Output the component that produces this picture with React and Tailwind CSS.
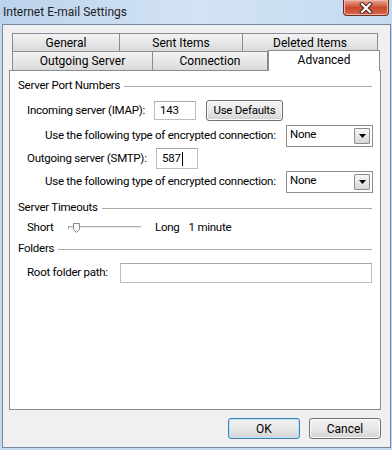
import React from "react"

const Tab = ({ label, className = "" }) => (
  <div
    className={`h-full flex items-center justify-center border-t border-r border-[#898c95] bg-linear-to-b from-[#f4f4f4] to-[#dadada] text-[12px] text-black ${className}`}
  >
    {label}
  </div>
)

const GroupHeader = ({ label, className = "" }) => (
  <div className={`flex items-center h-[16px] pl-[8px] pr-[8px] ${className}`}>
    <span className="whitespace-nowrap">{label}</span>
    <div className="flex-1 h-px bg-[#a8a8a8] ml-[4px]" />
  </div>
)

const Label = ({ children, className = "" }) => (
  <span className={`shrink-0 whitespace-nowrap ${className}`}>{children}</span>
)

const TextBox = ({ value, className = "", caret = false }) => (
  <div
    className={`shrink-0 flex items-center border border-[#b9bcc2] border-t-[#a3a6ab] bg-white pl-[5px] ${className}`}
  >
    <span>{value}</span>
    {caret && <span className="w-px h-[14px] bg-black ml-px" />}
  </div>
)

const Select = ({ value }) => (
  <div className="shrink-0 w-[87px] h-[22px] border border-[#8e8f8f] bg-white flex items-center justify-between pl-[3px] pr-[2px]">
    <span className="-mt-[2px]">{value}</span>
    <div className="w-[16px] h-[16px] border border-[#8c8c8c] rounded-[1px] bg-linear-to-b from-[#f6f6f6] to-[#d8d8d8] flex items-center justify-center">
      <svg width="7" height="4" viewBox="0 0 7 4">
        <path d="M0 0h7L3.5 4z" fill="#000" />
      </svg>
    </div>
  </div>
)

const Button = ({ label, className = "", primary = false }) => (
  <div
    className={`shrink-0 flex items-center justify-center rounded-[3px] border bg-linear-to-b from-[#f2f2f2] via-[#e9e9e9] to-[#d2d2d2] text-black ${
      primary
        ? "border-[#3c7fb1] shadow-[inset_0_0_0_1px_#bfe4f8]"
        : "border-[#707070] shadow-[inset_0_0_0_1px_#fbfbfb]"
    } ${className}`}
  >
    {label}
  </div>
)

export default function App() {
  return (
    <div className="w-[392px] h-[450px] bg-[#c2d8ee] flex flex-col font-[Roboto,'Liberation_Sans',sans-serif] text-[12px] text-black overflow-hidden">
      {/* title bar */}
      <div className="h-[24px] flex justify-between shrink-0 bg-linear-to-r from-[#bcd3ec] via-[#d3e3f5] to-[#c4daf0]">
        <span className="pl-[3px] pt-[3px] text-[12px] text-[#1e1e1e]">Internet E-mail Settings</span>
        <div className="mr-[3px] w-[46px] h-[16px] rounded-b-[4px] border border-t-0 border-[#6d2d24] bg-linear-to-b from-[#e9a896] via-[#c94b2f] to-[#d8644a] flex items-center justify-center shadow-[inset_0_0_0_1px_#eeb6a6]">
          <svg width="14" height="12" viewBox="0 0 14 12">
            <path d="M3 2l8 8M11 2l-8 8" stroke="#4a2a26" strokeWidth="4" strokeLinecap="square" />
            <path d="M3 2l8 8M11 2l-8 8" stroke="#fff" strokeWidth="2" strokeLinecap="square" />
          </svg>
        </div>
      </div>

      {/* client area */}
      <div className="ml-[2px] w-[389px] h-[424px] border border-[#77889b] bg-[#f0f0f0] flex flex-col pt-[8px] pl-[6px]">
        <div className="ml-[3px] flex flex-col">
          <div className="flex h-[18px]">
            <Tab label="General" className="w-[108px] border-l" />
            <Tab label="Sent Items" className="w-[123px]" />
            <Tab label="Deleted Items" className="w-[135px]" />
          </div>
          <div className="flex h-[19px] items-start">
            <Tab label="Outgoing Server" className="w-[141px] border-l" />
            <Tab label="Connection" className="w-[115px]" />
            <div className="relative z-10 w-[112px] h-[21px] -mt-px border-t border-r border-l border-[#898c95] bg-white flex items-center justify-center pb-[3px]">
              Advanced
            </div>
          </div>
        </div>

        {/* panel */}
        <div className="w-[372px] h-[340px] border border-[#898c95] bg-white flex flex-col text-[11.5px] tracking-[-0.25px]">
          <GroupHeader label="Server Port Numbers" className="mt-[7px]" />

          <div className="flex items-center h-[21px] mt-[6px] pl-[17px]">
            <Label className="w-[127px]">Incoming server (IMAP):</Label>
            <TextBox value="143" className="w-[42px] h-[19px]" />
            <Button label="Use Defaults" className="ml-[10px] w-[77px] h-[21px]" />
          </div>

          <div className="flex items-center h-[22px] mt-[4px] pl-[35px]">
            <Label className="w-[241px]">Use the following type of encrypted connection:</Label>
            <Select value="None" />
          </div>

          <div className="flex items-center h-[21px] mt-px pl-[17px]">
            <Label className="w-[129px]">Outgoing server (SMTP):</Label>
            <TextBox value="587" caret className="w-[42px] h-[21px]" />
          </div>

          <div className="flex items-center h-[22px] mt-[2px] pl-[35px]">
            <Label className="w-[241px]">Use the following type of encrypted connection:</Label>
            <Select value="None" />
          </div>

          <GroupHeader label="Server Timeouts" className="mt-[7px]" />

          <div className="flex items-center h-[20px] mt-[2px] pl-[17px]">
            <Label className="w-[41px]">Short</Label>
            <svg width="73" height="12" viewBox="0 0 73 12" className="shrink-0">
              <rect x="0" y="4" width="73" height="1" fill="#b4b4b4" />
              <rect x="0" y="5" width="73" height="1" fill="#e6e6e6" />
              <path d="M0.5 4V6.5" stroke="#9a9a9a" />
              <path d="M5.5 1.5h6v6l-3 3l-3-3z" fill="#fbfbfb" stroke="#8a8a8a" />
            </svg>
            <Label className="ml-[14px]">Long</Label>
            <Label className="ml-[9px]">1 minute</Label>
          </div>

          <GroupHeader label="Folders" className="mt-[3px]" />

          <div className="flex items-center h-[20px] mt-[6px] pl-[17px]">
            <Label className="w-[93px]">Root folder path:</Label>
            <TextBox value="" className="w-[252px] h-[20px]" />
          </div>
        </div>

        <div className="w-[372px] flex justify-end gap-[9px] mt-[8px]">
          <Button label="OK" primary className="w-[72px] h-[21px]" />
          <Button label="Cancel" className="w-[72px] h-[21px]" />
        </div>
      </div>
    </div>
  )
}
